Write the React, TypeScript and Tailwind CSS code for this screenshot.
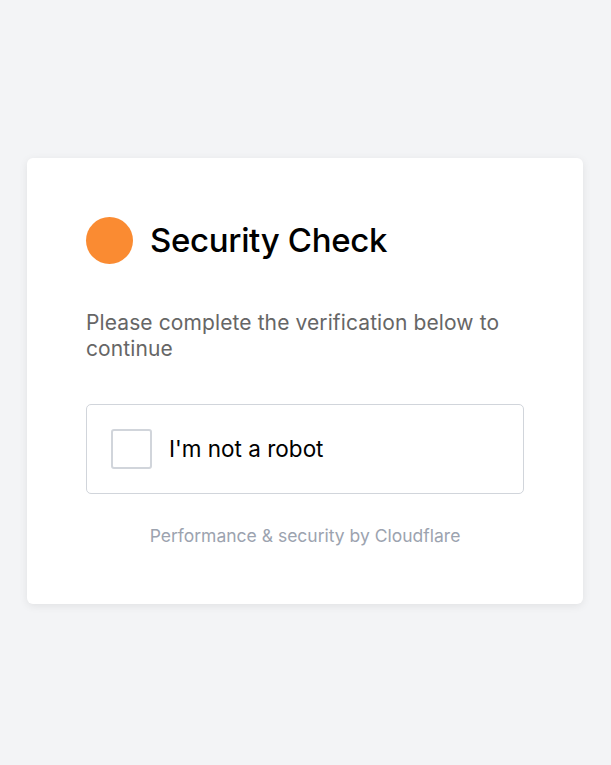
export default function App() {
  return (
    <div
      className="min-h-screen bg-[#f3f4f6] flex items-center justify-center pb-[4px] pr-px"
      style={{ fontFamily: 'Inter, "Noto Sans", sans-serif' }}
    >
      <div className="w-[556px] bg-white rounded-md shadow-[0_2px_8px_rgba(0,0,0,0.08)] px-[59px] pt-[59px] pb-[56px]">
        {/* Header */}
        <div className="flex items-center gap-[17px] h-[47px]">
          <div className="w-[47px] h-[47px] rounded-full bg-[#fa8b32] shrink-0" />
          <h1 className="text-[33px] leading-none font-medium text-black tracking-[-0.01em]">
            Security Check
          </h1>
        </div>

        <p className="mt-[46px] text-[21px] leading-[26px] text-[#666666] tracking-[0.005em]">
          Please complete the verification below to continue
        </p>

        {/* Checkbox */}
        <div className="mt-[42px] flex items-center gap-[17px] border border-[#d1d5db] rounded-[5px] p-6">
          <div className="w-[41px] h-[40px] border-2 border-[#d1d5db] rounded-[3px] shrink-0" />
          <span className="text-[22.5px] text-black">I'm not a robot</span>
        </div>

        <p className="mt-[30px] text-center text-[17.5px] leading-6 text-[#9ca3af]">
          Performance &amp; security by Cloudflare
        </p>
      </div>
    </div>
  );
}
